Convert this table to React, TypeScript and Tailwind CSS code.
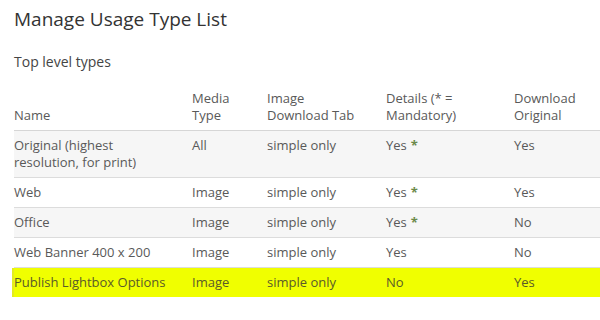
import { Fragment } from 'react'

type Row = {
  name: string
  media: string
  tab: string
  details: string
  mandatory: boolean
  original: string
  highlight?: boolean
}

const rows: Row[] = [
  { name: 'Original (highest resolution, for print)', media: 'All', tab: 'simple only', details: 'Yes', mandatory: true, original: 'Yes' },
  { name: 'Web', media: 'Image', tab: 'simple only', details: 'Yes', mandatory: true, original: 'Yes' },
  { name: 'Office', media: 'Image', tab: 'simple only', details: 'Yes', mandatory: true, original: 'No' },
  { name: 'Web Banner 400 x 200', media: 'Image', tab: 'simple only', details: 'Yes', mandatory: false, original: 'No' },
  { name: 'Publish Lightbox Options', media: 'Image', tab: 'simple only', details: 'No', mandatory: false, original: 'Yes', highlight: true },
]

export default function App() {
  return (
    <div
      className="w-[600px] h-[320px] overflow-hidden bg-white pl-[14px] text-[#595959]"
      style={{ fontFamily: '"Open Sans", Lato, sans-serif' }}
    >
      <h1 className="pt-[6px] text-[19px] leading-[26px] text-[#333]">Manage Usage Type List</h1>
      <h2 className="mt-[21px] text-[14px] leading-[18px] text-[#444]">Top level types</h2>

      <table className="mt-[19px] w-[586px] table-fixed border-collapse text-[13px] leading-[17px]">
        <colgroup>
          <col className="w-[178px]" />
          <col className="w-[75px]" />
          <col className="w-[119px]" />
          <col className="w-[128px]" />
          <col className="w-[86px]" />
        </colgroup>
        <thead>
          <tr className="border-b border-[#d6d6d6] text-left align-bottom">
            <th className="pb-[6px] font-normal">Name</th>
            <th className="pb-[6px] font-normal">Media<br />Type</th>
            <th className="pb-[6px] font-normal">Image<br />Download Tab</th>
            <th className="pb-[6px] font-normal">Details (* =<br />Mandatory)</th>
            <th className="pb-[6px] font-normal">Download<br />Original</th>
          </tr>
        </thead>
        <tbody>
          {rows.map((r, i) => (
            <tr
              key={r.name}
              className={
                r.highlight
                  ? 'bg-[#f0ff00] text-[#5a5a2a] shadow-[-2px_0_0_#e3ec20] align-top'
                  : i % 2 === 0
                    ? 'bg-[#f6f6f6] border-b border-[#dcdcdc] align-top'
                    : 'bg-white border-b border-[#dcdcdc] align-top'
              }
            >
              <td className="pt-[6px] pb-[6px] pr-4">
                {i === 0 ? (
                  <Fragment>Original (highest<br />resolution, for print)</Fragment>
                ) : (
                  r.name
                )}
              </td>
              <td className="pt-[6px] pb-[6px]">{r.media}</td>
              <td className="pt-[6px] pb-[6px]">{r.tab}</td>
              <td className="pt-[6px] pb-[6px]">
                {r.details}
                {r.mandatory && <span className="ml-[4px] font-bold text-[#6b8a4a]">*</span>}
              </td>
              <td className="pt-[6px] pb-[6px]">{r.original}</td>
            </tr>
          ))}
        </tbody>
      </table>
    </div>
  )
}
